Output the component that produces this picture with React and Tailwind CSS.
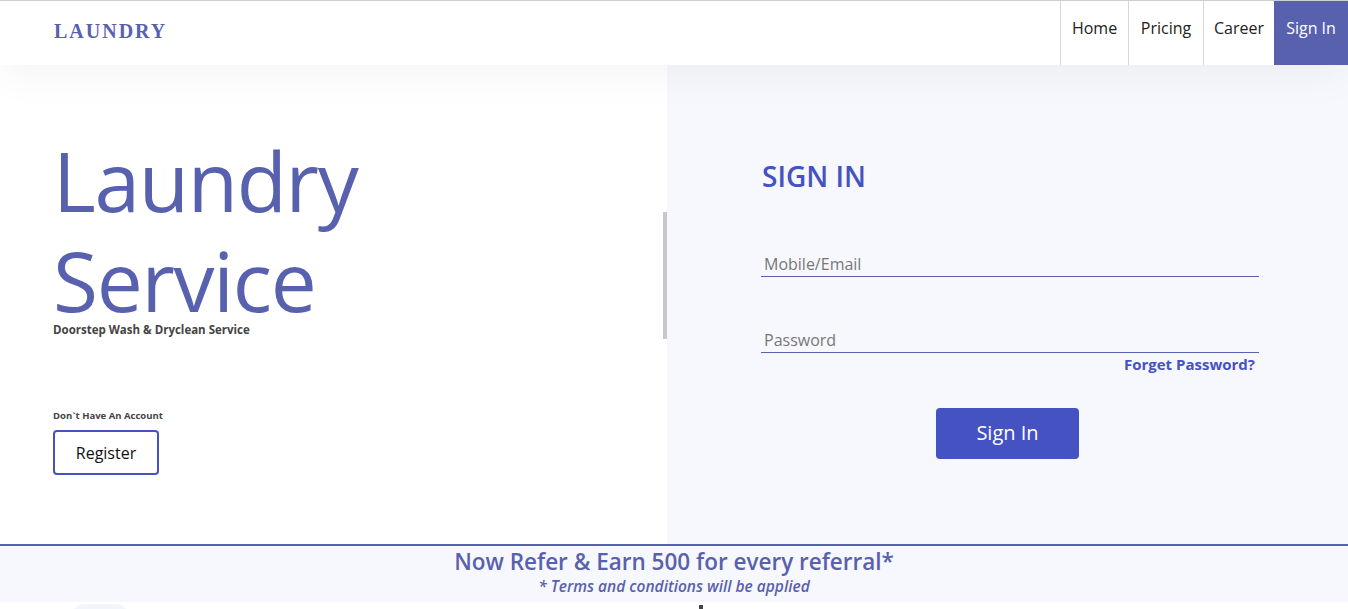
export default function App() {
  const font = { fontFamily: '"Open Sans", "Noto Sans", sans-serif' };
  return (
    <div className="w-[1348px] h-[609px] overflow-hidden bg-white" style={font}>
      <header className="relative z-10 h-[65px] border-t border-[#cfcfcf] bg-white flex items-stretch justify-between shadow-[0_12px_40px_rgba(0,0,0,0.045)]">
        <div
          className="pl-[54px] pt-[15px] text-[20px] leading-[30px] font-bold tracking-[2px] text-[#5861ae]"
          style={{ fontFamily: '"Liberation Serif", "Times New Roman", serif' }}
        >
          LAUNDRY
        </div>
        <nav className="flex text-[16px] text-[#222]">
          <a className="w-[68px] border-l border-[#d6d6d6] flex justify-center pt-[15px]">Home</a>
          <a className="w-[75px] border-l border-[#d6d6d6] flex justify-center pt-[15px]">Pricing</a>
          <a className="w-[71px] border-l border-[#d6d6d6] flex justify-center pt-[15px]">Career</a>
          <a className="w-[74px] bg-[#5861ae] text-white flex justify-center pt-[15px]">Sign In</a>
        </nav>
      </header>

      <main className="flex h-[479px]">
        <section className="relative w-[667px] bg-white pl-[53px] pt-[65px]">
          <h1 className="text-[82px] font-medium text-[#5861ae] tracking-[-1.3px]">
            <div className="leading-[100px]">Laundry</div>
            <div className="leading-[84px] mt-[8px]">Service</div>
          </h1>
          <p className="text-[11.5px] leading-[16px] font-bold text-[#444]">Doorstep Wash &amp; Dryclean Service</p>
          <p className="mt-[71px] text-[9.5px] leading-[14px] font-bold text-[#444]">Don`t Have An Account</p>
          <button className="mt-[7px] w-[106px] h-[45px] border-2 border-[#4552c1] rounded-[4px] text-[16px] text-[#111] bg-white">
            Register
          </button>
          <div className="absolute right-0 top-[147px] w-[4px] h-[127px] bg-[#c8c8c8]" />
        </section>

        <section className="flex-1 bg-[#f7f8fd] pl-[94px] pt-[92px]">
          <h2 className="text-[28px] leading-[38px] font-semibold text-[#4552c1] pl-[1px]">SIGN IN</h2>
          <div className="w-[498px] mt-[58px]">
            <div className="border-b border-[#5861ae] pl-[3px] pb-[1px] text-[16px] leading-[22px] text-[#777]">Mobile/Email</div>
            <div className="mt-[52px] border-b border-[#5861ae] pl-[3px] pb-[1px] text-[16px] leading-[22px] text-[#777]">Password</div>
            <div className="text-right pr-[4px] text-[15px] font-bold text-[#4552c1]">Forget Password?</div>
            <div className="flex justify-center mt-[32px] pr-[5px]">
              <button className="w-[143px] h-[51px] bg-[#4552c1] rounded-[4px] text-white text-[20px]">Sign In</button>
            </div>
          </div>
        </section>
      </main>

      <footer className="border-t-2 border-[#5861ae] bg-[#f7f8fd] h-[58px] flex flex-col items-center pt-[1px]">
        <div className="text-[22.5px] leading-[30px] font-semibold text-[#5861ae]">Now Refer &amp; Earn 500 for every referral*</div>
        <div className="text-[15.5px] leading-[18px] italic font-semibold text-[#5861ae]">* Terms and conditions will be applied</div>
      </footer>
      <div className="relative h-[7px]">
        <div className="absolute left-[70px] top-[2px] w-[60px] h-[30px] rounded-full bg-[#f3f5fc]" />
        <div className="absolute left-[699px] top-[3px] w-[4px] h-[4px] bg-[#444]" />
      </div>
    </div>
  );
}
